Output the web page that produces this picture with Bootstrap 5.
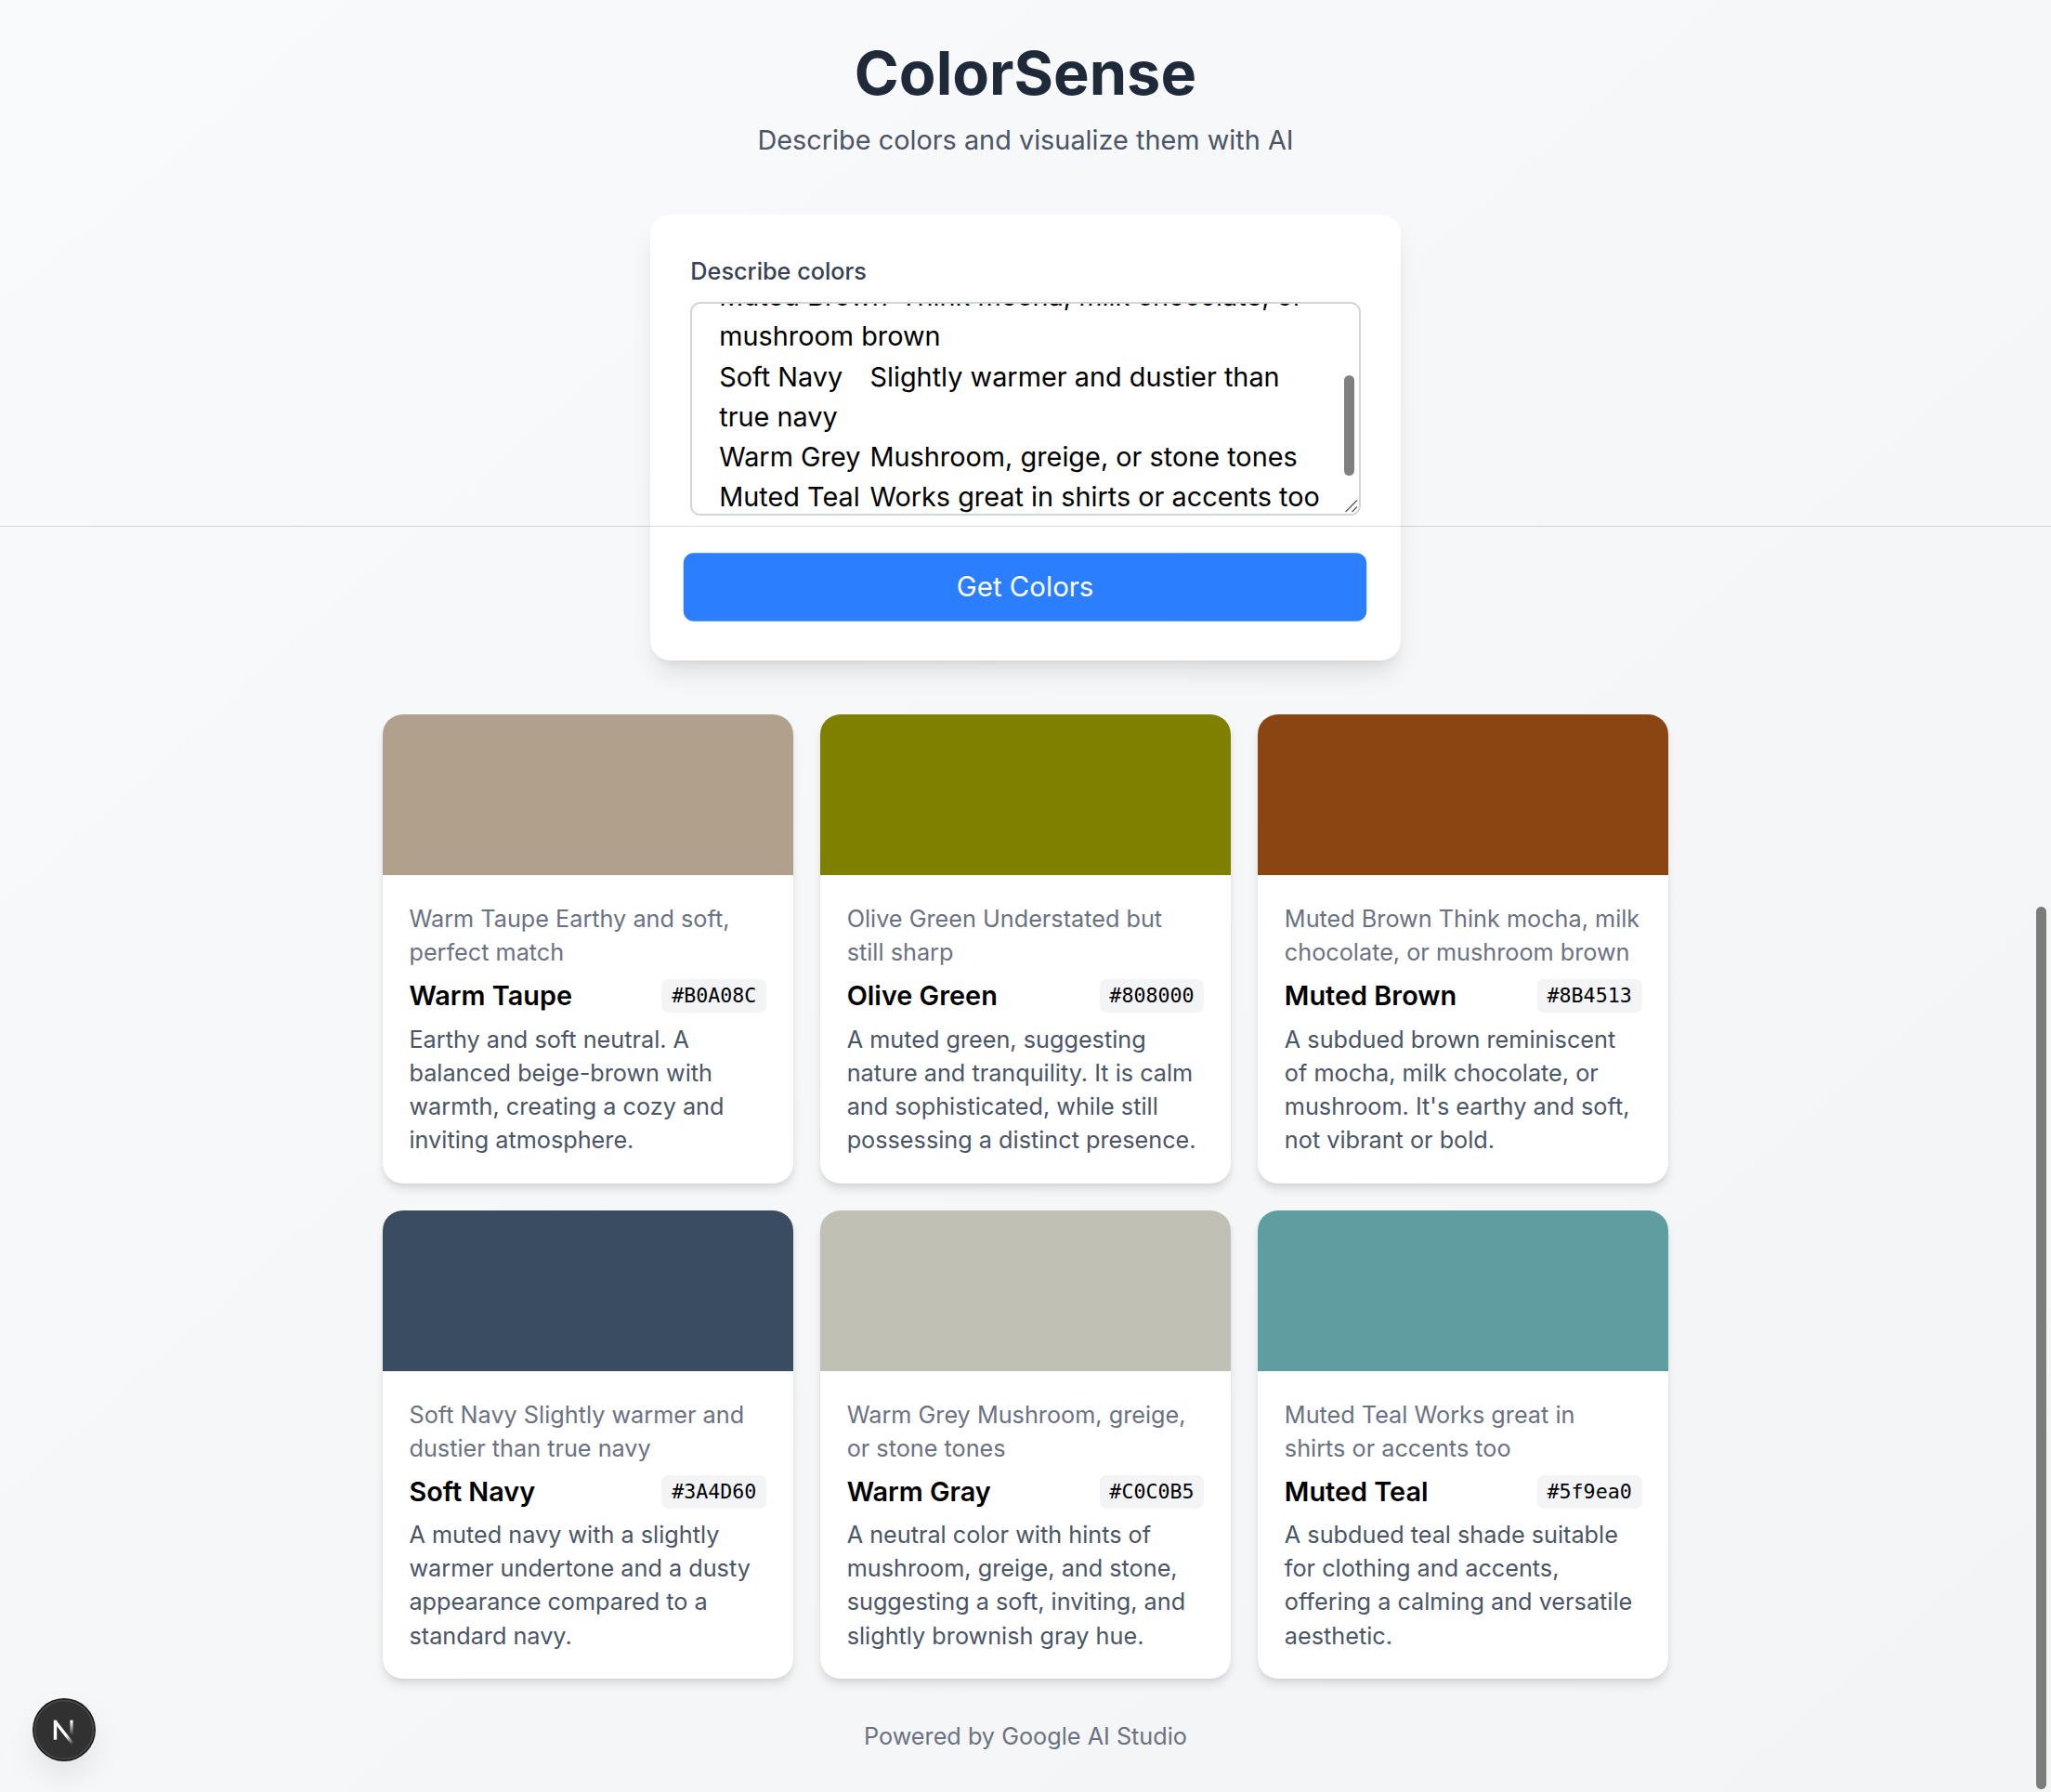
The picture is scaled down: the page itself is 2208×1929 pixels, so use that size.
<!DOCTYPE html>
<html lang="en">
<head>
<meta charset="utf-8">
<meta name="viewport" content="width=device-width, initial-scale=1">
<title>ColorSense</title>
<link href="https://cdn.jsdelivr.net/npm/bootstrap@5.3.0/dist/css/bootstrap.min.css" rel="stylesheet">
<style>
  html { font-size: 28.85px; overflow: hidden; }
  body {
    font-family: Inter, "Liberation Sans", sans-serif;
    color: #000;
    height: 100vh;
    overflow: hidden;
    background: linear-gradient(to bottom right, #f9fafb, #f3f4f6);
  }
  .page { max-width: 48rem; }
  .app-title { font-size: 2.25rem; line-height: 2.5rem; color: #1e2939; }
  .app-tagline { color: #4a5565; line-height: 1.44rem; padding-bottom: .06rem; }
  .text-sm { font-size: .875rem; line-height: 1.25rem; }
  .ask-card {
    width: 28rem; border-radius: .75rem; margin-top: 2rem; margin-bottom: 2rem;
    box-shadow: 0 .625rem .9375rem -.1875rem rgba(0,0,0,.1), 0 .25rem .375rem -.25rem rgba(0,0,0,.1);
  }
  .ask-label { color: #364153; font-weight: 500; }
  .prompt-box {
    height: 8rem; padding: 0 1rem; margin-bottom: 1.405rem;
    border: 2px solid #d1d5dc; border-radius: .375rem;
    overflow: hidden;
  }
  .prompt-text { white-space: pre; tab-size: 4; margin-top: -1.02rem; }
  .prompt-thumb { right: 5px; top: 77px; width: 11px; height: 108px; background: #808080; }
  .prompt-grip { right: 1px; bottom: 1px; width: 14px; height: 14px; }
  .btn-ask {
    --bs-btn-bg: #2b7fff; --bs-btn-border-color: #2b7fff; --bs-btn-color: #fff;
    --bs-btn-border-radius: .375rem; --bs-btn-border-width: 0;
    height: 2.5rem; padding: 0; transform: scale(1.02);
  }
  .tones { margin-top: 0; row-gap: 1rem; }
  .tones > * { margin-top: 0; }
  .tone-card {
    border-radius: .75rem;
    box-shadow: 0 .25rem .375rem -.0625rem rgba(0,0,0,.1), 0 .125rem .25rem -.125rem rgba(0,0,0,.1);
  }
  .swatch { height: 6rem; }
  .tone-source { color: #6a7282; }
  .tone-name { font-size: 1rem; line-height: 1.5rem; font-weight: 600; margin: 0; color: #000; }
  .tone-note { color: #4a5565; }
  .tone-hex {
    font: .75rem/1rem "DejaVu Sans Mono", monospace; color: #000;
    background: #f3f4f6; padding: .125rem .375rem; border-radius: .25rem;
    margin-top: 1px;
  }
  .credit { color: #6a7282; }
  .divider { top: 566px; height: 1px; background: rgba(0,0,0,.14); }
  .page-thumb { right: 5px; top: 976px; bottom: 3px; width: 11px; background: #7b7c7c; }
  .dev-badge {
    left: 34.500px; top: 1827.500px; width: 68px; height: 68px;
    border-radius: 50%; box-shadow: 0 16px 36px -4px rgba(0,0,0,.1);
  }
</style>
</head>
<body>
<main class="page mx-auto pt-4">
  <header class="text-center">
    <h1 class="app-title fw-bold mb-2">ColorSense</h1>
    <p class="app-tagline mb-0">Describe colors and visualize them with AI</p>
  </header>

  <form class="ask-card bg-white p-4 mx-auto">
    <label class="ask-label text-sm d-block mb-2">Describe colors</label>
    <div class="prompt-box position-relative bg-white">
      <div class="prompt-text">Muted Brown	Think mocha, milk chocolate, or
mushroom brown
Soft Navy	Slightly warmer and dustier than
true navy
Warm Grey	Mushroom, greige, or stone tones
Muted Teal	Works great in shirts or accents too</div>
      <span class="prompt-thumb position-absolute rounded-pill"></span>
      <svg class="prompt-grip position-absolute" viewBox="0 0 14 14" stroke="#555" stroke-width="1.2" fill="none"><path d="M.5 13 13 .5M7.500 13 13 7.500"/></svg>
    </div>
    <button type="button" class="btn btn-ask d-block w-100">Get Colors</button>
  </form>

  <section class="tones row g-3">
    <div class="col-4"><article class="tone-card bg-white overflow-hidden">
      <div class="swatch" style="background:#B0A08C"></div>
      <div class="p-3">
        <p class="tone-source text-sm mb-1">Warm Taupe Earthy and soft,<br>perfect match</p>
        <div class="d-flex justify-content-between align-items-center mb-1"><h2 class="tone-name">Warm Taupe</h2><span class="tone-hex">#B0A08C</span></div>
        <p class="tone-note text-sm mb-0">Earthy and soft neutral. A<br>balanced beige-brown with<br>warmth, creating a cozy and<br>inviting atmosphere.</p>
      </div>
    </article></div>
    <div class="col-4"><article class="tone-card bg-white overflow-hidden">
      <div class="swatch" style="background:#808000"></div>
      <div class="p-3">
        <p class="tone-source text-sm mb-1">Olive Green Understated but<br>still sharp</p>
        <div class="d-flex justify-content-between align-items-center mb-1"><h2 class="tone-name">Olive Green</h2><span class="tone-hex">#808000</span></div>
        <p class="tone-note text-sm mb-0">A muted green, suggesting<br>nature and tranquility. It is calm<br>and sophisticated, while still<br>possessing a distinct presence.</p>
      </div>
    </article></div>
    <div class="col-4"><article class="tone-card bg-white overflow-hidden">
      <div class="swatch" style="background:#8B4513"></div>
      <div class="p-3">
        <p class="tone-source text-sm mb-1">Muted Brown Think mocha, milk<br>chocolate, or mushroom brown</p>
        <div class="d-flex justify-content-between align-items-center mb-1"><h2 class="tone-name">Muted Brown</h2><span class="tone-hex">#8B4513</span></div>
        <p class="tone-note text-sm mb-0">A subdued brown reminiscent<br>of mocha, milk chocolate, or<br>mushroom. It's earthy and soft,<br>not vibrant or bold.</p>
      </div>
    </article></div>
    <div class="col-4"><article class="tone-card bg-white overflow-hidden">
      <div class="swatch" style="background:#3A4D60"></div>
      <div class="p-3">
        <p class="tone-source text-sm mb-1">Soft Navy Slightly warmer and<br>dustier than true navy</p>
        <div class="d-flex justify-content-between align-items-center mb-1"><h2 class="tone-name">Soft Navy</h2><span class="tone-hex">#3A4D60</span></div>
        <p class="tone-note text-sm mb-0">A muted navy with a slightly<br>warmer undertone and a dusty<br>appearance compared to a<br>standard navy.</p>
      </div>
    </article></div>
    <div class="col-4"><article class="tone-card bg-white overflow-hidden">
      <div class="swatch" style="background:#C0C0B5"></div>
      <div class="p-3">
        <p class="tone-source text-sm mb-1">Warm Grey Mushroom, greige,<br>or stone tones</p>
        <div class="d-flex justify-content-between align-items-center mb-1"><h2 class="tone-name">Warm Gray</h2><span class="tone-hex">#C0C0B5</span></div>
        <p class="tone-note text-sm mb-0">A neutral color with hints of<br>mushroom, greige, and stone,<br>suggesting a soft, inviting, and<br>slightly brownish gray hue.</p>
      </div>
    </article></div>
    <div class="col-4"><article class="tone-card bg-white overflow-hidden">
      <div class="swatch" style="background:#5f9ea0"></div>
      <div class="p-3">
        <p class="tone-source text-sm mb-1">Muted Teal Works great in<br>shirts or accents too</p>
        <div class="d-flex justify-content-between align-items-center mb-1"><h2 class="tone-name">Muted Teal</h2><span class="tone-hex">#5f9ea0</span></div>
        <p class="tone-note text-sm mb-0">A subdued teal shade suitable<br>for clothing and accents,<br>offering a calming and versatile<br>aesthetic.</p>
      </div>
    </article></div>
  </section>

  <footer class="credit text-sm text-center mt-4">Powered by Google AI Studio</footer>
</main>

<div class="divider position-absolute start-0 w-100"></div>
<div class="page-thumb position-absolute rounded-pill"></div>
<div class="dev-badge position-absolute">
  <svg class="d-block" width="68" height="68" viewBox="0 0 68 68" fill="none">
    <defs>
      <linearGradient id="fadeDiag" gradientUnits="userSpaceOnUse" x1="37" y1="40" x2="44" y2="49"><stop stop-color="#fff"/><stop offset="1" stop-color="#fff" stop-opacity="0"/></linearGradient>
      <linearGradient id="fadeStem" gradientUnits="userSpaceOnUse" x1="42" y1="25" x2="42" y2="40"><stop stop-color="#fff"/><stop offset="1" stop-color="#fff" stop-opacity="0"/></linearGradient>
    </defs>
    <circle cx="34" cy="34" r="34" fill="#1b1b1b"/>
    <circle cx="34" cy="34" r="31.500" fill="#313131" stroke="#4b4b4b" stroke-width="1.600"/>
    <path d="M24.500 44.700V23.700" stroke="#fff" stroke-width="3.400"/>
    <path d="M24.300 25 43.500 49.500" stroke="url(#fadeDiag)" stroke-width="3.400"/>
    <path d="M42 23.700V39.500" stroke="url(#fadeStem)" stroke-width="3.200"/>
  </svg>
</div>
<script src="https://cdn.jsdelivr.net/npm/bootstrap@5.3.0/dist/js/bootstrap.bundle.min.js"></script>
</body>
</html>
